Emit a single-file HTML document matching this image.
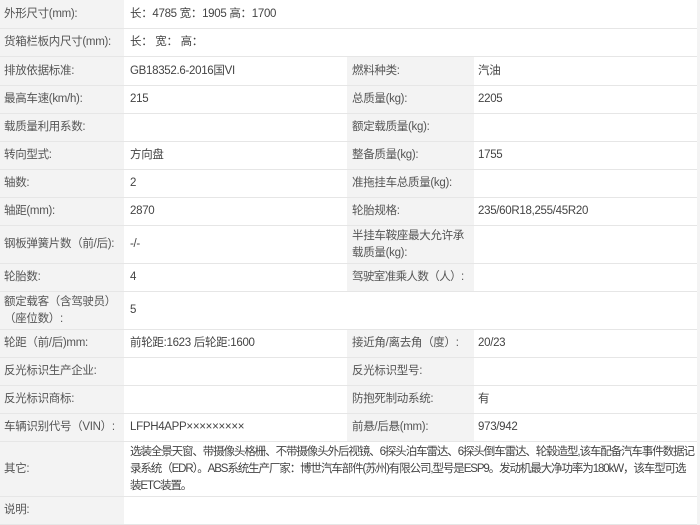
<!DOCTYPE html>
<html><head><meta charset="utf-8"><style>
body{margin:0;width:700px;height:521px;overflow:hidden;background:#f3f3f3;font-family:"Liberation Sans","Noto Sans CJK SC",sans-serif;font-size:11.5px;letter-spacing:-0.3px;color:#444;position:relative}
.r{position:absolute;left:0;width:697px;border-bottom:1px solid #e6e6e6;box-sizing:border-box}
.l,.v,.l2,.v2{position:absolute;top:0;bottom:0;display:flex;align-items:center;box-sizing:border-box;line-height:17px}
.l{left:0;width:124px;padding-left:4px;background:#f3f3f3;color:#555}
.v{left:124px;right:0;padding-left:6px;background:#fff}
.v.h{right:350px}
.l2{left:347px;width:127px;padding-left:5px;background:#f3f3f3;color:#555}
.v2{left:474px;right:0;padding-left:4px;background:#fff}
</style></head><body>
<div class="r" style="top:0;height:29px"><div class="l">外形尺寸(mm):</div><div class="v">长：4785 宽：1905 高：1700</div></div>
<div class="r" style="top:29px;height:28px"><div class="l">货箱栏板内尺寸(mm):</div><div class="v">长：&nbsp;宽：&nbsp;高：</div></div>
<div class="r" style="top:57px;height:29px"><div class="l">排放依据标准:</div><div class="v h">GB18352.6-2016国VI</div><div class="l2">燃料种类:</div><div class="v2">汽油</div></div>
<div class="r" style="top:86px;height:28px"><div class="l">最高车速(km/h):</div><div class="v h">215</div><div class="l2">总质量(kg):</div><div class="v2">2205</div></div>
<div class="r" style="top:114px;height:28px"><div class="l">载质量利用系数:</div><div class="v h"></div><div class="l2">额定载质量(kg):</div><div class="v2"></div></div>
<div class="r" style="top:142px;height:28px"><div class="l">转向型式:</div><div class="v h">方向盘</div><div class="l2">整备质量(kg):</div><div class="v2">1755</div></div>
<div class="r" style="top:170px;height:28px"><div class="l">轴数:</div><div class="v h">2</div><div class="l2">准拖挂车总质量(kg):</div><div class="v2"></div></div>
<div class="r" style="top:198px;height:28px"><div class="l">轴距(mm):</div><div class="v h">2870</div><div class="l2">轮胎规格:</div><div class="v2">235/60R18,255/45R20</div></div>
<div class="r" style="top:226px;height:38px"><div class="l">钢板弹簧片数（前/后):</div><div class="v h">-/-</div><div class="l2">半挂车鞍座最大允许承载质量(kg):</div><div class="v2"></div></div>
<div class="r" style="top:264px;height:28px"><div class="l">轮胎数:</div><div class="v h">4</div><div class="l2" style="letter-spacing:-0.6px;white-space:nowrap">驾驶室准乘人数（人）:</div><div class="v2"></div></div>
<div class="r" style="top:292px;height:38px"><div class="l">额定载客（含驾驶员）（座位数）:</div><div class="v">5</div></div>
<div class="r" style="top:330px;height:28px"><div class="l">轮距（前/后)mm:</div><div class="v h">前轮距:1623 后轮距:1600</div><div class="l2">接近角/离去角（度）:</div><div class="v2">20/23</div></div>
<div class="r" style="top:358px;height:28px"><div class="l">反光标识生产企业:</div><div class="v h"></div><div class="l2">反光标识型号:</div><div class="v2"></div></div>
<div class="r" style="top:386px;height:28px"><div class="l">反光标识商标:</div><div class="v h"></div><div class="l2">防抱死制动系统:</div><div class="v2">有</div></div>
<div class="r" style="top:414px;height:28px"><div class="l" style="white-space:nowrap">车辆识别代号（VIN）:</div><div class="v h">LFPH4APP×××××××××</div><div class="l2">前悬/后悬(mm):</div><div class="v2">973/942</div></div>
<div class="r" style="top:442px;height:55px"><div class="l">其它:</div><div class="v" style="padding-right:0;letter-spacing:-1.1px;white-space:nowrap;overflow:hidden"><div>选装全景天窗、带摄像头格栅、不带摄像头外后视镜、6探头泊车雷达、6探头倒车雷达、轮毂造型,该车配备汽车事件数据记<br>录系统（EDR）。ABS系统生产厂家：博世汽车部件(苏州)有限公司,型号是ESP9。发动机最大净功率为180kW，该车型可选<br>装ETC装置。</div></div></div>
<div class="r" style="top:497px;height:28px"><div class="l">说明:</div><div class="v"></div></div>
</body></html>
